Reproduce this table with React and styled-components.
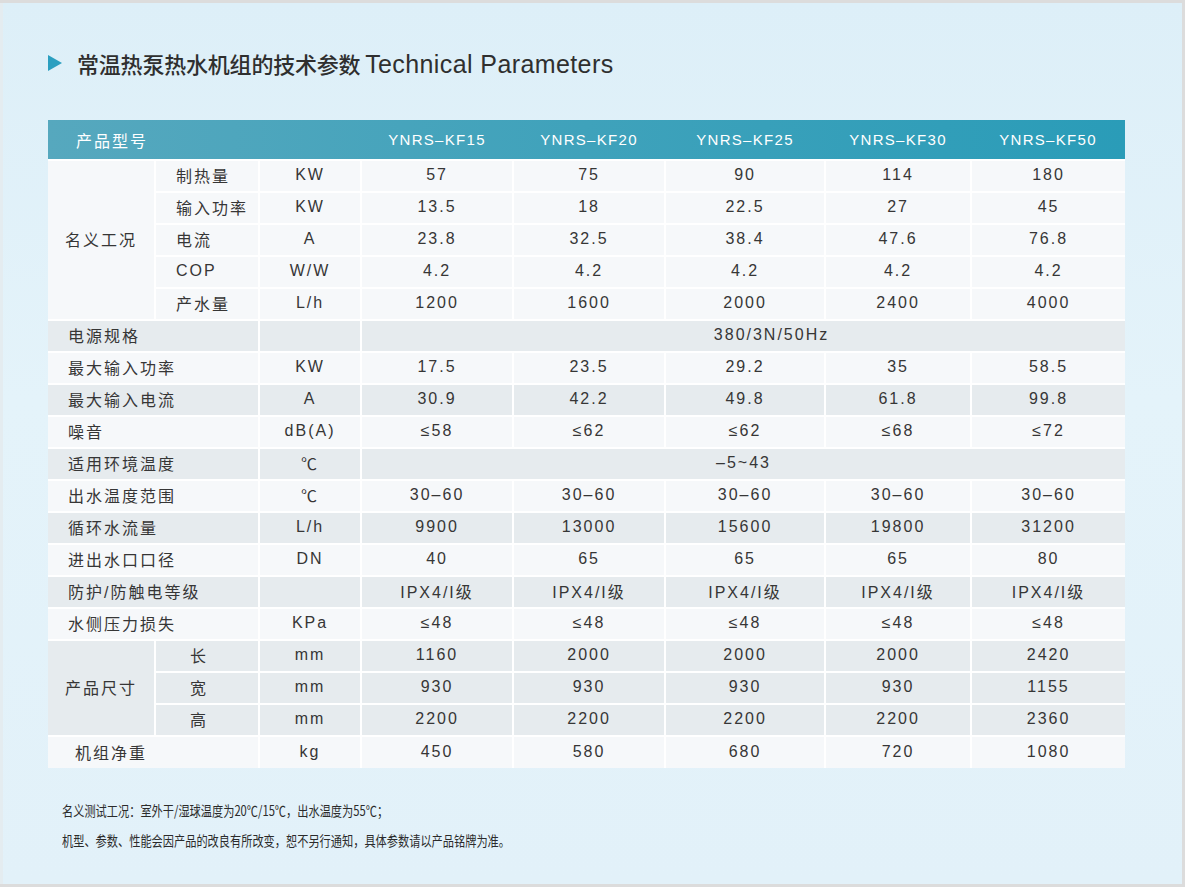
import React from 'react';
import styled, { createGlobalStyle } from 'styled-components';

const GlobalStyle = createGlobalStyle`
  html, body {
    margin: 0;
    padding: 0;
    background: #dcdcdc;
  }
  * {
    box-sizing: border-box;
  }
`;

const Panel = styled.div`
  width: 1182px;
  height: 881px;
  margin: 3px 3px 3px 0;
  padding: 45px 60px 0 48px;
  background: linear-gradient(180deg, #ddeff8 0%, #e4f3fa 45%, #e2f1f9 100%);
  border-left: 3px solid #e4ecf0;
  padding-left: 45px;
  font-family: "Liberation Sans", "Noto Sans CJK SC", sans-serif;
  color: #353535;
`;

const TitleRow = styled.div`
  display: flex;
  align-items: center;
  gap: 15px;
  height: 30px;
`;

const Arrow = styled.span`
  width: 0;
  height: 0;
  border-top: 8px solid transparent;
  border-bottom: 8px solid transparent;
  border-left: 14px solid #2b9fc0;
`;

const Title = styled.h1`
  margin: 0;
  font-size: 22px;
  font-weight: 500;
  color: #2f2f2f;
  font-family: "Noto Sans CJK SC", "Liberation Sans", sans-serif;
  letter-spacing: -0.2px;

  span {
    font-family: "Liberation Sans", sans-serif;
    font-size: 25px;
    font-weight: 400;
    letter-spacing: 0.4px;
  }
`;

const Table = styled.table`
  width: 1077px;
  margin-top: 42px;
  border-collapse: collapse;
  border-style: hidden;
  table-layout: fixed;
  font-size: 16px;
  letter-spacing: 2px;
`;

const HeadRow = styled.tr`
  background: linear-gradient(90deg, #56a8be 0%, #3fa2bb 50%, #2a9cb8 100%);
  color: #ffffff;
`;

const HeadCell = styled.th`
  height: 40px;
  padding: 0 0 0 ${(p) => (p.$left ? '28px' : '0')};
  font-weight: 400;
  font-size: ${(p) => (p.$left ? '16px' : '15px')};
  letter-spacing: ${(p) => (p.$left ? '2px' : '1.3px')};
  text-align: ${(p) => (p.$left ? 'left' : 'center')};
  border: none;
`;

const Row = styled.tr`
  background: ${(p) => (p.$shade ? '#e6ebee' : '#f6f8fa')};
`;

const Cell = styled.td`
  height: 32px;
  padding: 0 0 2px ${(p) => p.$pad || 0}px;
  border: 2px solid #ffffff;
  text-align: ${(p) => (p.$pad !== undefined ? 'left' : 'center')};
  white-space: nowrap;
  color: #363636;
`;

const SpanCell = styled(Cell)`
  padding-left: ${(p) => p.$shift || 0}px;
`;

const Footer = styled.div`
  margin-top: 27px;
  padding-left: 14px;
  font-family: "Noto Sans CJK SC", "Liberation Sans", sans-serif;
  font-size: 14px;
  line-height: 30px;
  color: #2b2b2b;
`;

const Note = styled.p`
  margin: 0;
  white-space: nowrap;
  transform: scaleX(0.8);
  transform-origin: left center;
`;

const models = ['YNRS–KF15', 'YNRS–KF20', 'YNRS–KF25', 'YNRS–KF30', 'YNRS–KF50'];

const ratedRows = [
  ['制热量', 'KW', ['57', '75', '90', '114', '180']],
  ['输入功率', 'KW', ['13.5', '18', '22.5', '27', '45']],
  ['电流', 'A', ['23.8', '32.5', '38.4', '47.6', '76.8']],
  ['COP', 'W/W', ['4.2', '4.2', '4.2', '4.2', '4.2']],
  ['产水量', 'L/h', ['1200', '1600', '2000', '2400', '4000']],
];

// a string value spans all five model columns
const midRows = [
  ['电源规格', '', '380/3N/50Hz', 56],
  ['最大输入功率', 'KW', ['17.5', '23.5', '29.2', '35', '58.5']],
  ['最大输入电流', 'A', ['30.9', '42.2', '49.8', '61.8', '99.8']],
  ['噪音', 'dB(A)', ['≤58', '≤62', '≤62', '≤68', '≤72']],
  ['适用环境温度', '℃', '–5~43'],
  ['出水温度范围', '℃', ['30–60', '30–60', '30–60', '30–60', '30–60']],
  ['循环水流量', 'L/h', ['9900', '13000', '15600', '19800', '31200']],
  ['进出水口口径', 'DN', ['40', '65', '65', '65', '80']],
  ['防护/防触电等级', '', ['IPX4/I级', 'IPX4/I级', 'IPX4/I级', 'IPX4/I级', 'IPX4/I级']],
  ['水侧压力损失', 'KPa', ['≤48', '≤48', '≤48', '≤48', '≤48']],
];

const sizeRows = [
  ['长', 'mm', ['1160', '2000', '2000', '2000', '2420']],
  ['宽', 'mm', ['930', '930', '930', '930', '1155']],
  ['高', 'mm', ['2200', '2200', '2200', '2200', '2360']],
];

const Values = ({ values, shift }) =>
  Array.isArray(values) ? (
    values.map((v, i) => <Cell key={i}>{v}</Cell>)
  ) : (
    <SpanCell colSpan={5} $shift={shift}>{values}</SpanCell>
  );

const App = () => {
  return (
    <>
      <GlobalStyle />
      <Panel>
        <TitleRow>
          <Arrow />
          <Title>
            常温热泵热水机组的技术参数 <span>Technical Parameters</span>
          </Title>
        </TitleRow>

        <Table>
          <colgroup>
            <col style={{ width: 107 }} />
            <col style={{ width: 104 }} />
            <col style={{ width: 102 }} />
            <col style={{ width: 152 }} />
            <col style={{ width: 152 }} />
            <col style={{ width: 160 }} />
            <col style={{ width: 146 }} />
            <col style={{ width: 154 }} />
          </colgroup>
          <thead>
            <HeadRow>
              <HeadCell colSpan={3} $left>产品型号</HeadCell>
              {models.map((m) => (
                <HeadCell key={m}>{m}</HeadCell>
              ))}
            </HeadRow>
          </thead>
          <tbody>
            {ratedRows.map(([label, unit, values], i) => (
              <Row key={label}>
                {i === 0 && <Cell rowSpan={5}>名义工况</Cell>}
                <Cell $pad={20}>{label}</Cell>
                <Cell>{unit}</Cell>
                <Values values={values} />
              </Row>
            ))}
            {midRows.map(([label, unit, values, shift], i) => (
              <Row key={label} $shade={i % 2 === 0}>
                <Cell colSpan={2} $pad={20}>{label}</Cell>
                <Cell>{unit}</Cell>
                <Values values={values} shift={shift} />
              </Row>
            ))}
            {sizeRows.map(([label, unit, values], i) => (
              <Row key={label} $shade>
                {i === 0 && <Cell rowSpan={3}>产品尺寸</Cell>}
                <Cell $pad={34}>{label}</Cell>
                <Cell>{unit}</Cell>
                <Values values={values} />
              </Row>
            ))}
            <Row>
              <Cell colSpan={2} $pad={27}>机组净重</Cell>
              <Cell>kg</Cell>
              <Values values={['450', '580', '680', '720', '1080']} />
            </Row>
          </tbody>
        </Table>

        <Footer>
          <Note>名义测试工况：室外干/湿球温度为20℃/15℃，出水温度为55℃；</Note>
          <Note>机型、参数、性能会因产品的改良有所改变，恕不另行通知，具体参数请以产品铭牌为准。</Note>
        </Footer>
      </Panel>
    </>
  );
};

export default App;
